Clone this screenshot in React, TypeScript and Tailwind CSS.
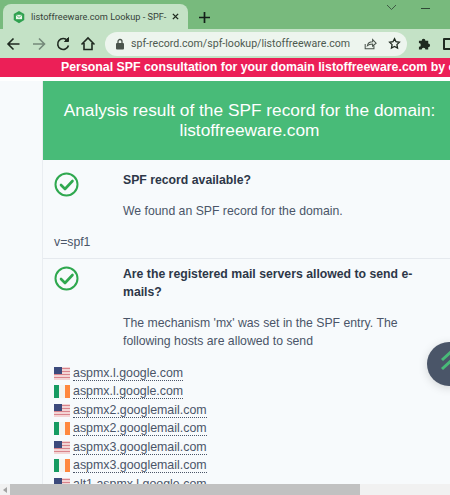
import React from 'react';

const hosts = [
  { flag: 'us', name: 'aspmx.l.google.com' },
  { flag: 'ie', name: 'aspmx.l.google.com' },
  { flag: 'us', name: 'aspmx2.googlemail.com' },
  { flag: 'ie', name: 'aspmx2.googlemail.com' },
  { flag: 'us', name: 'aspmx3.googlemail.com' },
  { flag: 'ie', name: 'aspmx3.googlemail.com' },
  { flag: 'us', name: 'alt1.aspmx.l.google.com' },
];

function CheckCircle() {
  return (
    <svg width="25" height="25" viewBox="0 0 25 25" fill="none" className="shrink-0">
      <circle cx="12.5" cy="12.5" r="11" stroke="#2fa84f" strokeWidth="2" />
      <path d="M7 13l4 4 7.5-8" stroke="#2fa84f" strokeWidth="2.6" strokeLinecap="round" strokeLinejoin="round" />
    </svg>
  );
}

function Flag({ kind }: { kind: string }) {
  if (kind === 'ie') {
    return (
      <span className="flex h-[13px] w-4 shrink-0">
        <span className="w-[5px] bg-[#169b62]" />
        <span className="w-[6px] bg-[#f4f4f0]" />
        <span className="w-[5px] bg-[#ff883e]" />
      </span>
    );
  }
  return (
    <svg width="16" height="13" viewBox="0 0 16 13" className="shrink-0">
      <rect width="16" height="13" fill="#f3d5d5" />
      <rect y="1" width="16" height="1" fill="#d9848c" />
      <rect y="4" width="16" height="1" fill="#d9848c" />
      <rect y="7" width="16" height="1" fill="#d9848c" />
      <rect y="10" width="16" height="1" fill="#d9848c" />
      <rect width="8" height="7" fill="#3c4a7c" />
    </svg>
  );
}

function Toolbar() {
  return (
    <div className="flex h-[29px] shrink-0 items-center bg-[#c4e2c6]">
      <svg width="93" height="20" viewBox="0 0 93 20" fill="none" stroke="#1f2a20" strokeWidth="1.6" className="ml-[6px] shrink-0">
        <path d="M13.500 10H2.500M7.500 4.500L2 10l5.500 5.500" />
        <path d="M27 10h11M33 4.500l5.500 5.500L33 15.500" stroke="#74897a" />
        <path d="M61.500 6.500a5.500 5.500 0 1 0 1 5" />
        <path d="M62.500 3.500v4h-4z" fill="#1f2a20" strokeWidth="1" />
        <path d="M75.500 10.500l6.500-6.500 6.500 6.500M78 9v6.500h8V9" />
      </svg>
      <div className="ml-[6px] flex h-[24px] w-[302px] shrink-0 items-center rounded-full bg-[#edf5ee] pl-[10px]">
        <svg width="10" height="12" viewBox="0 0 10 12" className="shrink-0">
          <rect x="1" y="5" width="8" height="6.500" rx="1" fill="#4a544c" />
          <path d="M3 5.500V3.500a2 2 0 0 1 4 0v2" fill="none" stroke="#4a544c" strokeWidth="1.300" />
        </svg>
        <span className="ml-[6px] w-[223px] shrink-0 whitespace-nowrap font-['Roboto',sans-serif] text-[10.6px] text-[#4d5a50]">
          spf-record.com/spf-lookup/listoffreeware.com
        </span>
        <svg width="14" height="14" viewBox="0 0 16 16" fill="none" stroke="#4a544c" strokeWidth="1.200" className="ml-[9px] shrink-0">
          <path d="M2.500 8v5.500h10V10M5 10c.5-3 3-4.500 6-4.500V3l4 4-4 3.500V8c-2.500 0-4.500.5-6 2z" />
        </svg>
        <svg width="13" height="13" viewBox="0 0 24 24" fill="none" stroke="#1f2a20" strokeWidth="2.400" className="ml-[11px] shrink-0">
          <path d="M12 3l2.800 5.800 6.200.9-4.500 4.400 1.100 6.300L12 17.400l-5.600 3 1.100-6.300L3 9.700l6.200-.9z" />
        </svg>
      </div>
      <svg width="13" height="13" viewBox="0 0 14 14" className="ml-[11px] shrink-0" fill="#1f2a20">
        <path d="M1 4h3a2 2 0 0 1 4 0h3v3a2 2 0 0 1 0 4v2.500H8a2 2 0 0 0-4 0H1v-3a2 2 0 0 0 0-4z" />
      </svg>
      <span className="ml-[12px] h-[12px] w-[20px] shrink-0 rounded-[1px] border-2 border-[#1f2a20]" />
    </div>
  );
}

function TabStrip() {
  return (
    <div className="flex h-[29px] shrink-0 items-end bg-[#78ba7d] pl-[3px]">
      <div className="flex h-[25px] w-[185px] shrink-0 items-center rounded-t-[8px] bg-[#c4e2c6] pl-[9px]">
        <svg width="14" height="14" viewBox="0 0 16 16" className="shrink-0">
          <path d="M8 1l6 3.500v7L8 15l-6-3.500v-7z" fill="#2fa14f" />
          <rect x="4.500" y="5.500" width="7" height="5" fill="#e9f6ea" />
          <path d="M4.500 5.500L8 8.500l3.500-3" fill="none" stroke="#2fa14f" strokeWidth="0.800" />
        </svg>
        <span className="ml-[5px] w-[137px] shrink-0 overflow-hidden whitespace-nowrap font-['Roboto',sans-serif] text-[9.200px] text-[#37433a]">
          listoffreeware.com Lookup - SPF-
        </span>
        <svg width="7" height="7" viewBox="0 0 8 8" stroke="#1f2a20" strokeWidth="1.600" className="ml-[4px] shrink-0">
          <path d="M1 1l6 6M7 1L1 7" />
        </svg>
      </div>
      <svg width="11" height="11" viewBox="0 0 11 11" stroke="#14201a" strokeWidth="1.700" className="mb-[6px] ml-[11px] shrink-0">
        <path d="M5.500 0v11M0 5.500h11" />
      </svg>
      <svg width="11" height="7" viewBox="0 0 11 7" fill="none" stroke="#3e5a44" strokeWidth="1" className="mb-[18px] ml-[176px] shrink-0">
        <path d="M1 1l4.500 4.500L10 1" />
      </svg>
      <span className="mb-[20px] ml-[24px] h-px w-[9px] shrink-0 bg-[#2f4a36]" />
    </div>
  );
}

export default function App() {
  return (
    <div className="relative flex h-[495px] w-[450px] flex-col overflow-hidden bg-[#f7fafc] font-['Liberation_Sans',Arial,sans-serif]">
      <TabStrip />
      <Toolbar />
      <div className="h-[19px] shrink-0 whitespace-nowrap bg-[#ec1f57] pl-[61px] text-[12.350px] font-bold leading-[19px] text-white">
        Personal SPF consultation for your domain listoffreeware.com by our experts
      </div>
      <div className="h-[4px] shrink-0 bg-white" />
      <div className="min-h-0 flex-1 overflow-hidden pl-[42px]">
        <div className="w-[414px] border-l border-[#e9edf1]">
          <div className="flex h-[79px] flex-col items-center justify-center bg-[#48bb78] pb-[1px] text-center text-[17.300px] leading-[20px] text-white">
            <div>Analysis result of the SPF record for the domain:</div>
            <div>listoffreeware.com</div>
          </div>
          <div className="border-b border-[#e5e9ee] pb-[7px] pl-[11px] pt-[12px] text-[12.250px] leading-[18px] text-[#4a5568]">
            <div className="flex">
              <CheckCircle />
              <div className="ml-[44px] mt-[-1px]">
                <div className="font-bold text-[#2d3748]">SPF record available?</div>
                <div className="mt-[13px]">We found an SPF record for the domain.</div>
              </div>
            </div>
            <div className="mt-[13px]">v=spf1</div>
          </div>
          <div className="pl-[11px] pt-[7px] text-[12.250px] leading-[18px] text-[#4a5568]">
            <div className="flex">
              <CheckCircle />
              <div className="ml-[44px] mt-[-1px] w-[297px]">
                <div className="font-bold text-[#2d3748]">Are the registered mail servers allowed to send e-mails?</div>
                <div className="mt-[13px]">The mechanism 'mx' was set in the SPF entry. The following hosts are allowed to send</div>
              </div>
            </div>
            <div className="mt-[14px] text-[12.400px]">
              {hosts.map((h, i) => (
                <div key={i} className="flex h-[18.500px] items-center">
                  <Flag kind={h.flag} />
                  <span className="ml-[3px] border-b border-dotted border-[#4a5568] leading-[14px]">{h.name}</span>
                </div>
              ))}
            </div>
          </div>
        </div>
      </div>
      {/* scrollbar */}
      <div className="relative flex h-[11px] shrink-0 items-center bg-[#f1f1f1]">
        <span className="ml-[3px] h-0 w-0 border-y-[3px] border-r-[4px] border-y-transparent border-r-[#a3a3a3]" />
        <span className="ml-[3px] h-full w-[350px] bg-[#c1c1c1]" />
      </div>
      {/* floating button */}
      <div className="absolute left-[427px] top-[342px] h-[44px] w-[44px] rounded-full bg-[#4a5568] shadow-[0_2px_10px_rgba(0,0,0,0.15)]">
        <svg width="24" height="22" viewBox="0 0 24 22" fill="none" stroke="#48bb78" strokeWidth="3" className="absolute left-[13px] top-[7px]">
          <path d="M2 11l10-9 10 9M2 20l10-9 10 9" />
        </svg>
      </div>
    </div>
  );
}
